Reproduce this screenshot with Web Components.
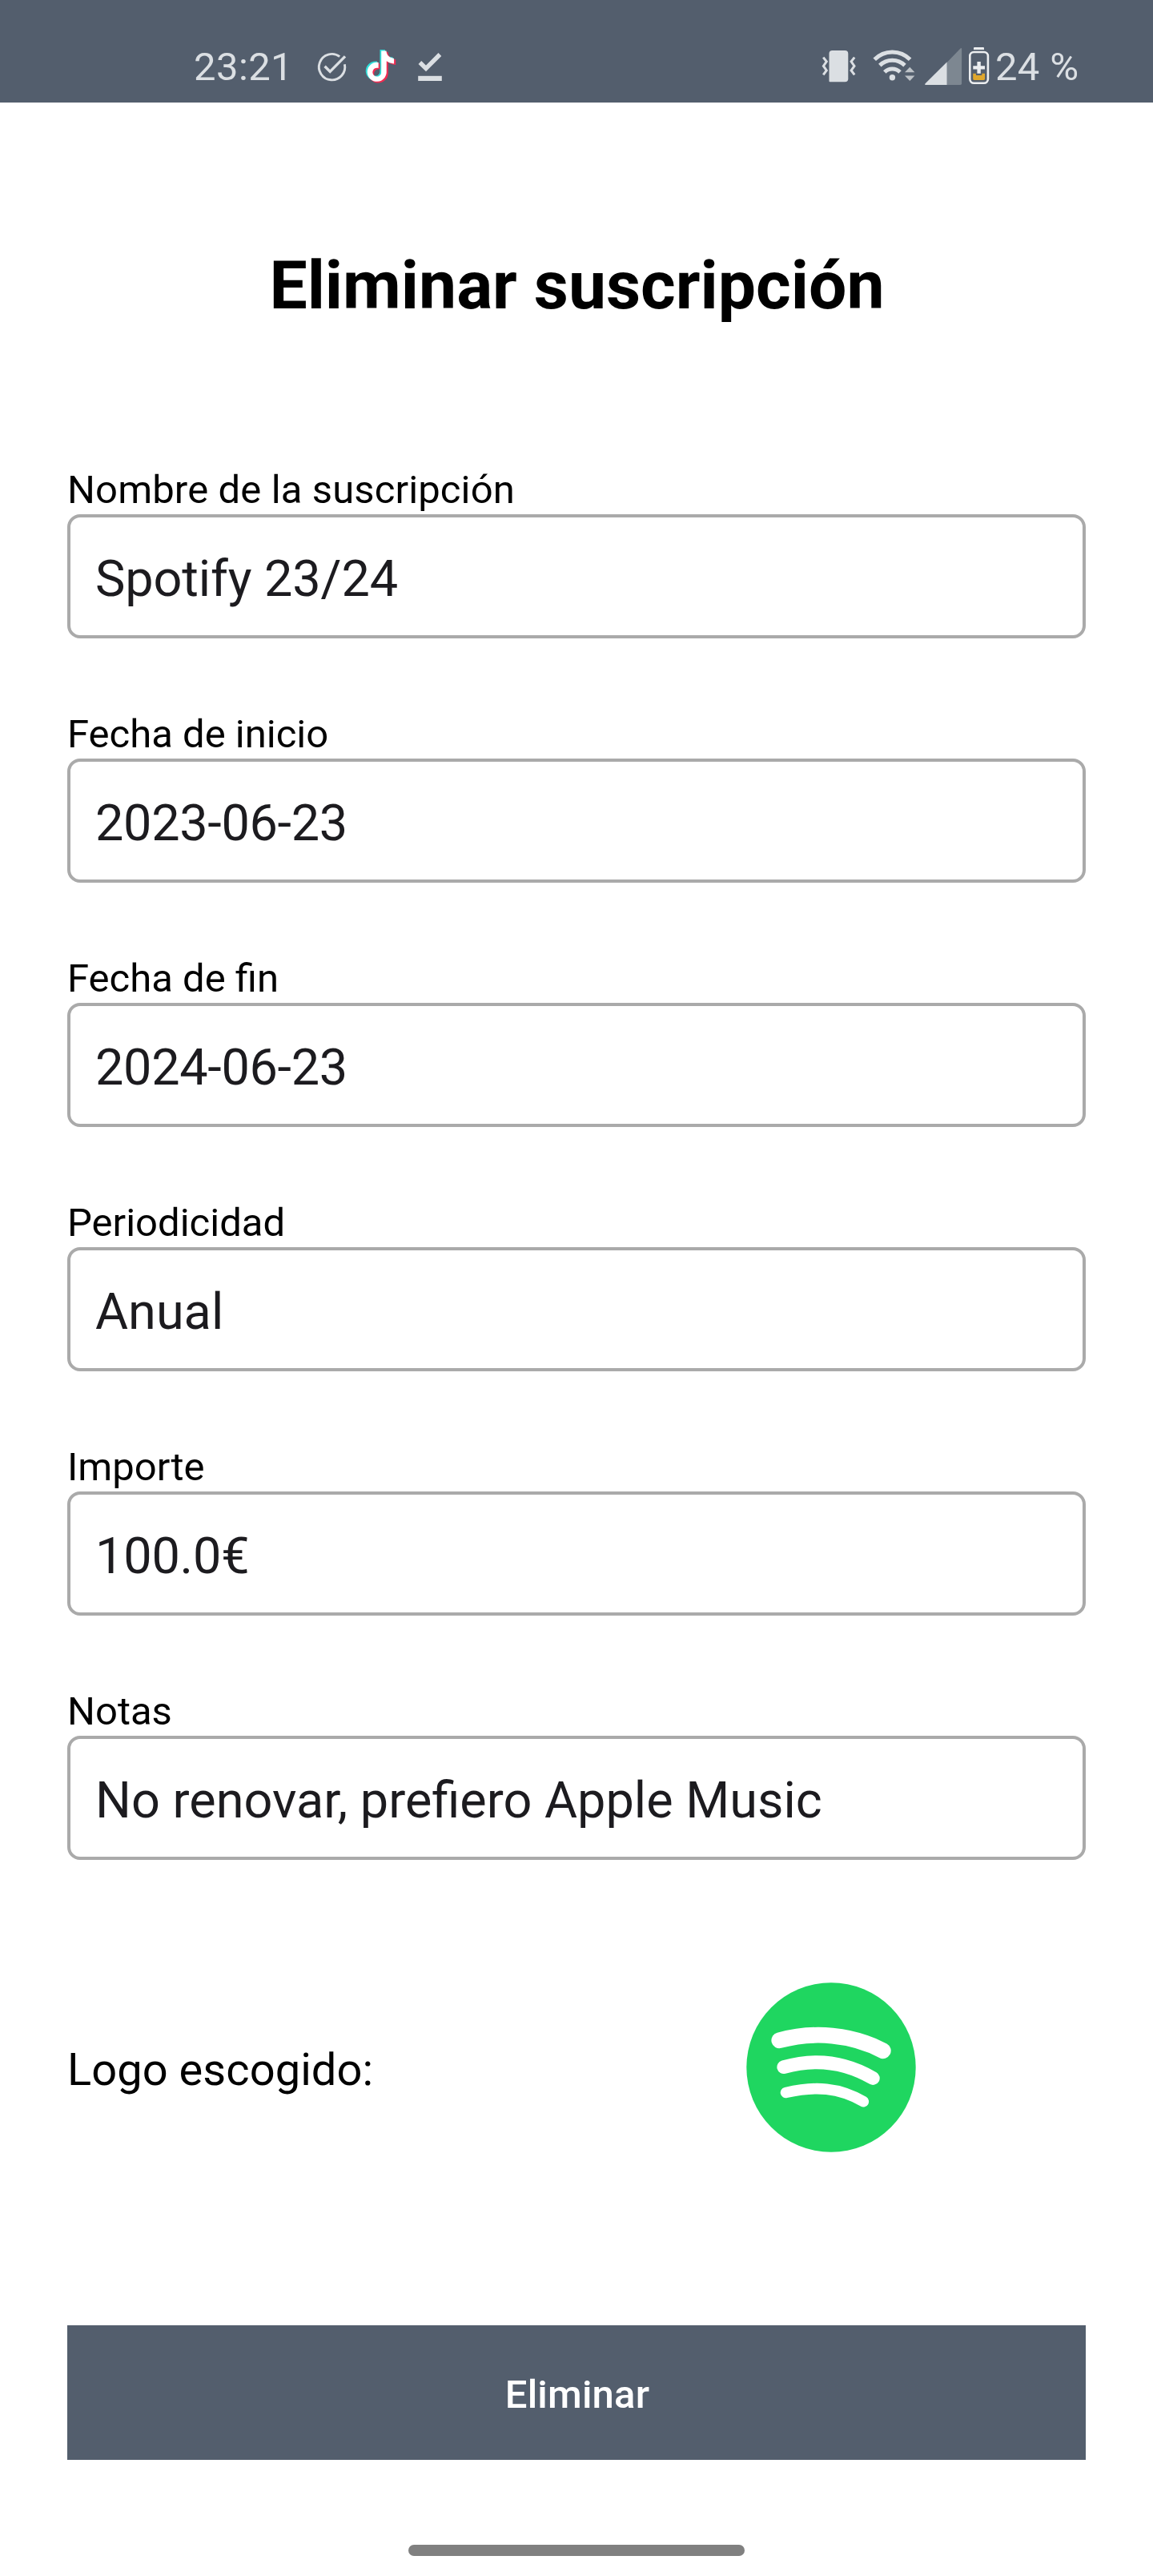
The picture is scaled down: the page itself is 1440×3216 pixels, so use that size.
<!DOCTYPE html>
<html lang="es">
<head>
<meta charset="utf-8">
<title>Eliminar suscripción</title>
<style>
  html, body { margin: 0; background: #fff; }
  body { font-family: Roboto, "Liberation Sans", sans-serif; color: #000; }
</style>
</head>
<body>
<subscription-screen></subscription-screen>

<template id="status-bar">
  <style>
    :host { display: flex; align-items: flex-start; justify-content: space-between; box-sizing: border-box; width: 1440px; height: 128px; padding: 55px 92px 0 242px; background: #535e6d; color: #dbdfe3; font-size: 49px; line-height: 57px; white-space: nowrap; }
    .group { display: flex; height: 57px; }
    .clock { width: 149px; letter-spacing: .4px; }
    .battery { width: 105px; letter-spacing: .3px; }
    svg { display: block; height: 57px; flex: none; }
  </style>
  <div class="group">
    <span class="clock"><slot name="time"></slot></span>
    <svg width="60" viewBox="391 55 60 57" fill="none" stroke="#dbdfe3">
      <path d="M424.2 70.6A16.2 16.2 0 1 0 430.4 80.2" stroke-width="2.9"/>
      <path d="M405.6 82.8L412.2 89.4L431 70.4" stroke-width="3.4"/>
    </svg>
    <svg width="60" viewBox="451 55 60 57">
      <defs><path id="note" d="M12.525.02c1.31-.02 2.61-.01 3.91-.02.08 1.53.63 3.09 1.75 4.17 1.12 1.11 2.7 1.62 4.24 1.79v4.03c-1.44-.05-2.89-.35-4.2-.97-.57-.26-1.1-.59-1.62-.93-.01 2.92.01 5.84-.02 8.75-.08 1.4-.54 2.79-1.35 3.94-1.31 1.92-3.58 3.17-5.91 3.21-1.43.08-2.86-.31-4.08-1.03-2.02-1.19-3.44-3.37-3.65-5.71-.02-.5-.03-1-.01-1.49.18-1.9 1.12-3.72 2.58-4.96 1.66-1.44 3.98-2.13 6.15-1.72.02 1.48-.04 2.96-.04 4.44-.99-.32-2.15-.23-3.02.37-.63.41-1.11 1.04-1.36 1.75-.21.51-.15 1.07-.14 1.61.24 1.64 1.82 3.02 3.5 2.87 1.12-.01 2.19-.66 2.77-1.61.19-.33.4-.67.41-1.06.1-1.79.06-3.57.07-5.36.01-4.03-.01-8.05.02-12.07z"/></defs>
      <use href="#note" fill="#2fded9" transform="translate(454.2 61.9) scale(1.62)"/>
      <use href="#note" fill="#f02c52" transform="translate(457.9 64.7) scale(1.62)"/>
      <use href="#note" fill="#fff" transform="translate(456.2 63.4) scale(1.6)"/>
    </svg>
    <svg width="45" viewBox="511 55 45 57">
      <path d="M524.4 78L532 85.4L549.4 68" fill="none" stroke="#dbdfe3" stroke-width="5.4"/>
      <path d="M522.2 94.8h29.6v6.2h-29.6z" fill="#dbdfe3"/>
    </svg>
  </div>
  <div class="group">
    <svg width="60" viewBox="1020 55 60 57" fill="none" stroke="#dbdfe3" stroke-width="3">
      <path d="M1039.5 63H1055.3a4 4 0 0 1 4 4V98.3a4 4 0 0 1-4 4H1036.5a1 1 0 0 1-1-1V67a4 4 0 0 1 4-4z" fill="#dbdfe3" stroke="none"/>
      <path d="M1028.2 71.6L1032.3 76.8L1028.4 82.4L1032.3 88L1028.2 93.4M1067.2 71.6L1063.1 76.8L1067 82.4L1063.1 88L1067.2 93.4"/>
    </svg>
    <svg width="70" viewBox="1080 55 70 57" fill="none" stroke="#dbdfe3" stroke-width="5">
      <path d="M1092.2 74.3A31 31 0 0 1 1136.6 74.3M1098.8 81.6A22.5 22.5 0 0 1 1130 81.6M1104.8 90.1A13.5 13.5 0 0 1 1124 90.1"/>
      <circle cx="1114.4" cy="96.7" r="3.7" fill="#dbdfe3" stroke="none"/>
      <path d="M1130 90.2L1136.3 83.7L1142.4 90.2zM1130 94.4H1142.4L1136.3 101z" fill="#bdc2c7" stroke="none"/>
    </svg>
    <svg width="56" viewBox="1150 55 56 57">
      <path d="M1182.6 78.1L1199.5 60.5Q1201.1 59.4 1201.1 61.2V104.2Q1201.1 106 1199.3 106H1182.6z" fill="#7d8791"/>
      <path d="M1182.6 77.5V106H1156.2Q1154.2 105.6 1155.6 104.2z" fill="#dbdfe3"/>
    </svg>
    <svg width="37" viewBox="1206 55 37 57">
      <path d="M1216 60q0-1 1-1h11q1 0 1 1v2h-13z" fill="#eceef0"/>
      <rect x="1211.3" y="65" width="22.6" height="38.8" rx="5" fill="none" stroke="#eceef0" stroke-width="2.6"/>
      <path d="M1215.2 91.8H1230V98.6q0 1.4-1.4 1.4h-12q-1.4 0-1.4-1.4z" fill="#dfa72d"/>
      <path d="M1218.9 91h7.4v3h-7.4z" fill="#535e6d"/>
      <path d="M1222.6 77V91.8M1215.3 84.4H1230" stroke="#eceef0" stroke-width="4.4"/>
    </svg>
    <span class="battery"><slot name="battery"></slot></span>
  </div>
</template>

<template id="form-field">
  <style>
    :host { display: flex; flex-direction: column; gap: 2px; }
    .label { font-size: 49px; line-height: 57px; letter-spacing: var(--label-spacing, normal); }
    .box { box-sizing: border-box; height: 155px; padding: 40px 31px 0; border: 4px solid #aaa; border-radius: 16px; font-size: 63px; line-height: 73px; letter-spacing: var(--value-spacing, normal); color: #1c1b1f; white-space: nowrap; }
  </style>
  <div class="label"><slot name="label"></slot></div>
  <div class="box"><slot></slot></div>
</template>

<template id="brand-logo">
  <style>
    :host { display: block; width: 212px; height: 212px; }
    svg { display: block; }
  </style>
  <svg width="212" height="212" viewBox="932 2475 212 212" fill="none" stroke="#fff" stroke-linecap="round">
    <circle cx="1038" cy="2581" r="105.7" fill="#1fd660" stroke="none"/>
    <path d="M973.3 2547.3C1016 2535.5 1064 2539.5 1102.8 2560.2" stroke-width="19.8"/>
    <path d="M978.8 2580.7C1018 2569.5 1056 2574.5 1090.3 2594.5" stroke-width="16.8"/>
    <path d="M981.5 2612.5C1018 2604 1048 2606 1078.3 2623.7" stroke-width="13.6"/>
  </svg>
</template>

<template id="action-button">
  <style>
    :host { display: block; }
    button { display: flex; justify-content: center; align-items: flex-start; box-sizing: border-box; width: 100%; height: 168px; margin: 0; padding: 58px 0 0 2px; border: 0; background: #535e6d; color: #fff; font: 500 49px/57px Roboto, "Liberation Sans", sans-serif; letter-spacing: .2px; }
  </style>
  <button type="button"><slot></slot></button>
</template>

<template id="home-indicator">
  <style>
    :host { display: block; width: 420px; height: 14px; border-radius: 7px; background: #808080; }
  </style>
</template>

<template id="subscription-screen">
  <style>
    :host { display: flex; flex-direction: column; width: 1440px; height: 3216px; background: #fff; overflow: hidden; }
    main { display: flex; flex-direction: column; padding: 179px 84px 0; }
    h1 { margin: 0 0 177px; padding-left: 1px; font-size: 84px; line-height: 99px; font-weight: 700; text-align: center; }
    .fields { display: flex; flex-direction: column; gap: 91px; }
    .name { --label-spacing: .12px; --value-spacing: -.12px; }
    .date { --value-spacing: -.32px; }
    .amount { --value-spacing: -.2px; }
    .logo { display: grid; grid-template-columns: 1fr 1fr; align-items: center; margin: 153px 0 216px; }
    .logo span { margin-top: 6px; font-size: 56px; line-height: 66px; letter-spacing: .05px; }
    .logo brand-logo { justify-self: center; }
    home-indicator { margin: 106px auto 0; }
  </style>
  <status-bar><span slot="time">23:21</span><span slot="battery">24 %</span></status-bar>
  <main>
    <h1>Eliminar suscripción</h1>
    <div class="fields">
      <form-field class="name"><span slot="label">Nombre de la suscripción</span>Spotify 23/24</form-field>
      <form-field class="date"><span slot="label">Fecha de inicio</span>2023-06-23</form-field>
      <form-field class="date"><span slot="label">Fecha de fin</span>2024-06-23</form-field>
      <form-field><span slot="label">Periodicidad</span>Anual</form-field>
      <form-field class="amount"><span slot="label">Importe</span>100.0€</form-field>
      <form-field><span slot="label">Notas</span>No renovar, prefiero Apple Music</form-field>
    </div>
    <div class="logo"><span>Logo escogido:</span><brand-logo></brand-logo></div>
    <action-button>Eliminar</action-button>
  </main>
  <home-indicator></home-indicator>
</template>

<script>
  class TemplateElement extends HTMLElement {
    constructor() {
      super();
      const template = document.getElementById(this.localName);
      this.attachShadow({ mode: 'open' }).append(template.content.cloneNode(true));
    }
  }
  for (const name of ['status-bar', 'form-field', 'brand-logo', 'action-button', 'home-indicator', 'subscription-screen']) {
    customElements.define(name, class extends TemplateElement {});
  }
</script>
</body>
</html>
